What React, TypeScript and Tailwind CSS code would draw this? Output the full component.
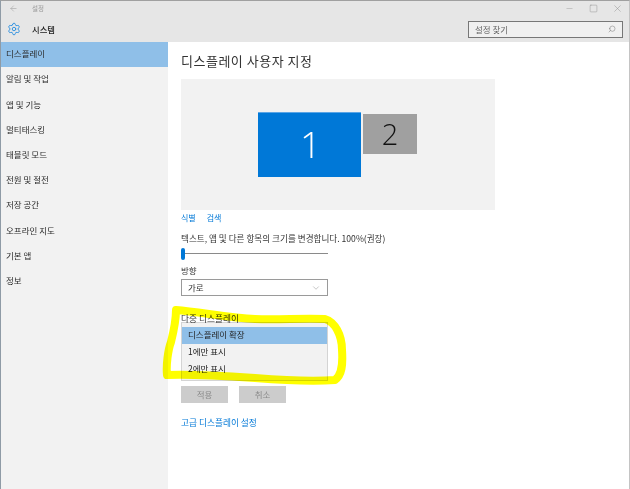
import React from 'react';
import { ArrowLeft, ChevronDown, Minus, Search, Settings, Square, X } from 'lucide-react';

const MENU = ['디스플레이', '알림 및 작업', '앱 및 기능', '멀티태스킹', '태블릿 모드', '전원 및 절전', '저장 공간', '오프라인 지도', '기본 앱', '정보'];

const FONT = 'font-["Noto_Sans_CJK_KR","Liberation_Sans",sans-serif]';

const Sidebar = () => (
  <div className="w-[167px] shrink-0 bg-[#f2f2f2]">
    {MENU.map((item, i) => (
      <div key={item} className={`h-[25.2px] pl-[5px] pb-[2px] flex items-center text-[8.5px] text-[#2b2b2b] ${i === 0 ? 'bg-[#8fbfe8]' : ''}`}>
        {item}
      </div>
    ))}
  </div>
);

const Header = () => (
  <div className="h-[41px] bg-[#e6e6e6] relative shrink-0">
    <div className="h-[15px] flex items-center">
      <ArrowLeft className="w-[9px] h-[9px] ml-[8px] text-[#a0a0a0]" strokeWidth={1.5} />
      <span className="ml-[14px] text-[6.5px] text-[#9a9a9a]">설정</span>
      <div className="ml-auto flex items-center gap-[15px] pr-[7px] text-[#8c8c8c]">
        <Minus className="w-[9px] h-[9px]" strokeWidth={1} />
        <Square className="w-[9px] h-[9px]" strokeWidth={1.2} />
        <X className="w-[9px] h-[9px] scale-125" strokeWidth={1} />
      </div>
    </div>
    <div className="h-[26px] flex items-center pl-[6px] pr-[6px]">
      <Settings className="w-[14px] h-[14px] text-[#2b8fe0]" strokeWidth={1.6} />
      <span className="ml-[11px] text-[8.3px] font-medium text-[#1a1a1a]">시스템</span>
      <div className="ml-auto w-[155px] h-[17px] border-[1.5px] border-[#777777] bg-[#f0f0f0] flex items-center px-[6px] text-[8.5px] text-[#666666]">
        설정 찾기
        <Search className="ml-auto w-[8px] h-[8px] -scale-x-100 text-[#777777]" strokeWidth={1.5} />
      </div>
    </div>
  </div>
);

const Preview = () => (
  <div className="w-[314px] h-[131px] bg-[#f2f2f2] flex items-start justify-center gap-[2px] pt-[33px] pr-[2px]">
    <div className='w-[103px] h-[65px] bg-[#0078d7] border-t border-[#5aa5e6] pl-[3px] pb-[2px] flex items-center justify-center font-["Open_Sans"] text-[37px] font-light text-white'>1</div>
    <div className='w-[54px] h-[40px] mt-[2px] bg-[#a0a0a0] pl-[1px] flex items-center justify-center font-["Open_Sans"] text-[29px] font-light text-[#111111]'>2</div>
  </div>
);

const Highlight = () => (
  <svg className="absolute left-[-1px] top-[-1px] pointer-events-none mix-blend-multiply" width="630" height="489" viewBox="0 0 630 489" fill="none">
    <path
      d="M176 310 C200 312 230 318 255 319 C280 320 300 318 325 319 C335 322 342 335 342 350 C343 365 342 375 335 380 C310 382 280 380 255 378 C225 376 190 374 167 375 C166 365 168 350 171 342 C174 330 176 320 176 310"
      stroke="#ffff00"
      strokeWidth="8"
      strokeLinejoin="round"
      strokeLinecap="round"
    />
  </svg>
);

export default function App() {
  return (
    <div className={`relative w-[630px] h-[489px] overflow-hidden bg-white border-t border-t-[#a0a0a0] border-l border-l-[#8f9ba6] border-r border-r-[#c4c4c4] flex flex-col ${FONT}`}>
      <Header />
      <div className="flex flex-1 min-h-0">
        <Sidebar />
        <div className="flex-1 pl-[13px]">
          <h1 className="h-[37px] pt-[9px] text-[13px] leading-[20px] tracking-[0.5px] text-[#333333]">디스플레이 사용자 지정</h1>
          <Preview />
          <div className="mt-[1px] flex gap-[11px] h-[13px] items-center text-[8px] text-[#0078d7]">
            <span>식별</span>
            <span>검색</span>
          </div>
          <div className="mt-[8px] h-[13px] flex items-center text-[8.6px] text-[#333333]">텍스트, 앱 및 다른 항목의 크기를 변경합니다. 100%(권장)</div>
          <div className="relative mt-[2px] w-[147px] h-[13px] flex items-center">
            <div className="w-full h-px bg-[#8a8a8a]" />
            <div className="absolute left-0 top-px w-[4px] h-[12px] rounded-[2px] bg-[#0078d7]" />
          </div>
          <div className="mt-[4px] h-[13px] flex items-center text-[8.5px] text-[#333333]">방향</div>
          <div className="mt-[2px] w-[147px] h-[17px] border border-[#9a9a9a] flex items-center px-[6px] text-[8.5px] text-[#333333]">
            가로
            <ChevronDown className="ml-auto w-[10px] h-[10px] text-[#777777]" strokeWidth={1} />
          </div>
          <div className="mt-[16px] h-[13px] flex items-center text-[8.7px] text-[#333333]">다중 디스플레이</div>
          <div className="mt-[-3px] w-[147px] h-[59px] border border-[#d4d4d4] bg-[#f2f2f2] pt-[4px] text-[8.5px] text-[#222222]">
            <div className="h-[17px] flex items-center pl-[6px] pb-[2px] bg-[#8fbfe8]">디스플레이 확장</div>
            <div className="h-[17px] flex items-center pl-[6px] pb-[2px]">1에만 표시</div>
            <div className="h-[17px] flex items-center pl-[6px] pb-[2px]">2에만 표시</div>
          </div>
          <div className="mt-[5px] flex gap-[11px] text-[8.5px] text-[#8a8a8a]">
            <div className="w-[47px] h-[17px] bg-[#cccccc] flex items-center justify-center">적용</div>
            <div className="w-[47px] h-[17px] bg-[#cccccc] flex items-center justify-center">취소</div>
          </div>
          <div className="mt-[13px] h-[13px] flex items-center text-[8.7px] text-[#0078d7]">고급 디스플레이 설정</div>
        </div>
      </div>
      <Highlight />
    </div>
  );
}
